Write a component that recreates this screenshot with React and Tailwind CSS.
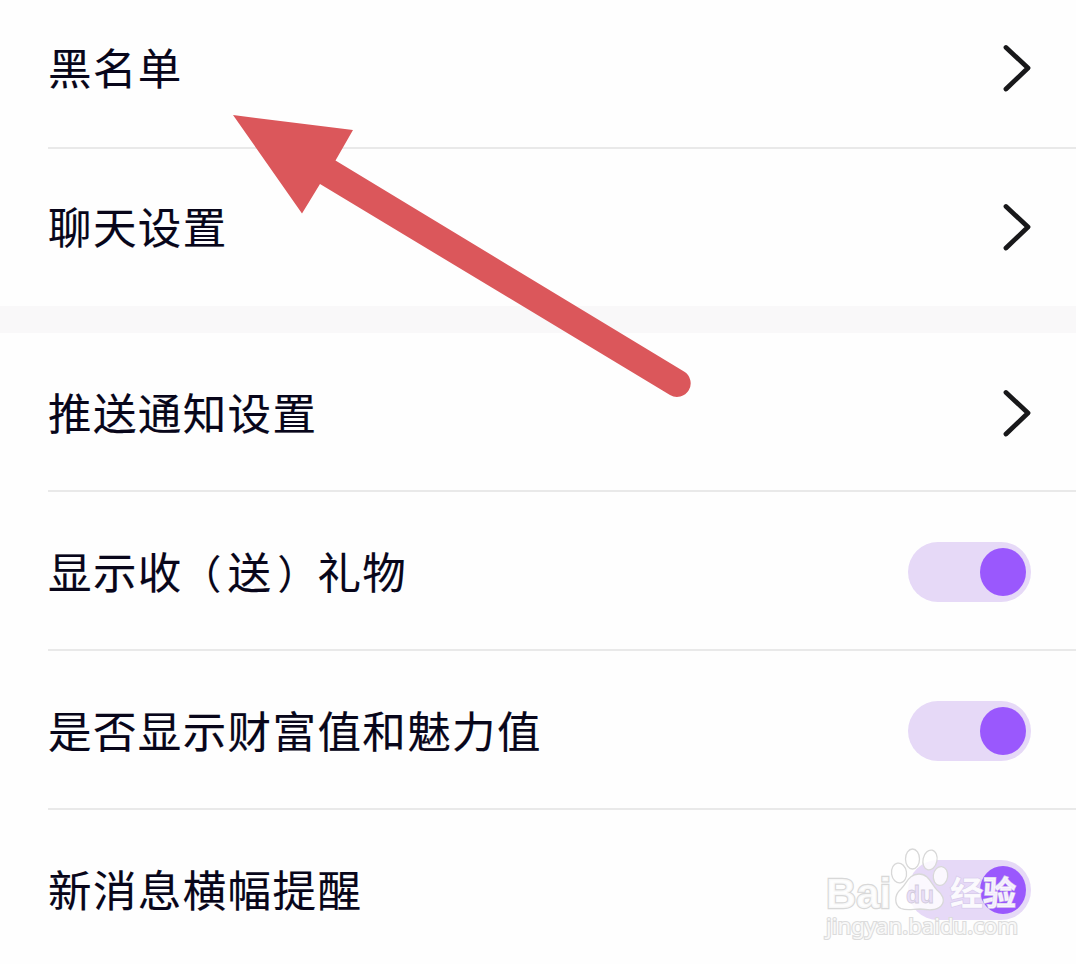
import React from "react";

const Chevron = () => (
  <svg className="h-[50px] w-[30px] shrink-0" viewBox="0 0 30 50" fill="none">
    <path
      d="M5 4.5 L27 25 L5 46"
      stroke="#18181a"
      strokeWidth="4.8"
      strokeLinecap="round"
      strokeLinejoin="round"
    />
  </svg>
);

const Toggle = () => (
  <button
    role="switch"
    aria-checked="true"
    className="flex h-[60px] w-[123px] shrink-0 items-center justify-end rounded-full bg-[#e6d9f7] pr-[5px]"
  >
    <span className="h-12 w-[46px] rounded-[50%] bg-[#9a58fd]"></span>
  </button>
);

const Row = ({ label, toggle, last, raised }) => (
  <div className="pl-12">
    <div
      className={`flex items-center justify-between pr-[45px] ${
        last ? "h-[157px]" : "h-[159px] border-b-2 border-[#e9e9e9]"
      } ${raised ? "pb-[2px]" : "pt-[2px]"}`}
    >
      <span
        className={`text-[43.5px] leading-none tracking-[1.4px] whitespace-nowrap [-webkit-text-stroke:0.15px_#08061a] ${
          raised ? "mb-px" : "mb-[2px]"
        }`}
      >
        {label}
      </span>
      {toggle ? <Toggle /> : <Chevron />}
    </div>
  </div>
);

const Arrow = () => (
  <svg
    className="pointer-events-none absolute top-0 left-0"
    width="1076"
    height="420"
    viewBox="0 0 1076 420"
  >
    <path
      d="M233 115 L353 130 L335.500 160.500 L684 371.500 A13.600 13.600 0 0 1 670 395 L320 184 L302 213.500 Z"
      fill="#db575b"
    />
  </svg>
);

const Watermark = () => (
  <svg
    className="pointer-events-none absolute top-[840px] left-[810px]"
    width="240"
    height="120"
    viewBox="0 0 240 120"
  >
    <g
      fill="#fff"
      fillOpacity="0.82"
      stroke="#d8d8d8"
      strokeWidth="1.3"
      className="font-['Liberation_Sans','Noto_Sans_CJK_SC',sans-serif]"
    >
      <text x="16" y="68" fontSize="42" fontWeight="700" textLength="65" lengthAdjust="spacingAndGlyphs" paintOrder="stroke" strokeWidth="2.4">
        Bai
      </text>
      <ellipse cx="89" cy="33" rx="7.500" ry="10" transform="rotate(-8 89 33)" />
      <ellipse cx="102.500" cy="19" rx="7" ry="10" />
      <ellipse cx="120" cy="20" rx="7" ry="10" transform="rotate(12 120 20)" />
      <ellipse cx="130.500" cy="36" rx="7.200" ry="9.500" transform="rotate(8 130.500 36)" />
      <path d="M109 34 C99 34 97 43 91 49 C84 55 84 65 91 68.500 C97 71 103 69 110 69 C118 70 126 71 131 66 C136 60 132 54 127 50 C121 44 119 34 109 34 Z" />
      <text x="96" y="63" fontSize="24" fontWeight="700" textLength="28" lengthAdjust="spacingAndGlyphs" fill="#e6d9f7" stroke="#d2cbdc" strokeWidth="0.8">
        du
      </text>
      <text x="140" y="65" fontSize="33" fontWeight="700" textLength="66" paintOrder="stroke" stroke="#d8ccec" strokeWidth="1.500" fillOpacity="0.9">
        经验
      </text>
      <text x="16" y="94" fontSize="22" textLength="192" lengthAdjust="spacingAndGlyphs" paintOrder="stroke" strokeWidth="2.200" stroke="#dcdcdc" className="font-['Noto_Sans',sans-serif]">
        jingyan.baidu.com
      </text>
    </g>
  </svg>
);

const giftLabel = (
  <>
    显示收
    <span className="mr-[5px] -ml-[1.5px] text-[40px]">（</span>
    送
    <span className="-mr-[1.5px] ml-[5px] text-[40px]">）</span>
    礼物
  </>
);

export default function App() {
  return (
    <div
      lang="zh-CN"
      className="relative h-[964px] w-[1076px] overflow-hidden bg-[#fefefe] font-['Noto_Sans_CJK_SC',sans-serif] text-[#08061a]"
    >
      <div className="-mt-[10px]">
        <Row label="黑名单" raised />
        <Row label="聊天设置" raised last />
      </div>
      <div className="h-[27px] bg-[#f9f8f9]"></div>
      <div>
        <Row label="推送通知设置" />
        <Row label={giftLabel} toggle />
        <Row label="是否显示财富值和魅力值" toggle />
        <Row label="新消息横幅提醒" toggle last />
      </div>
      <Arrow />
      <Watermark />
    </div>
  );
}
